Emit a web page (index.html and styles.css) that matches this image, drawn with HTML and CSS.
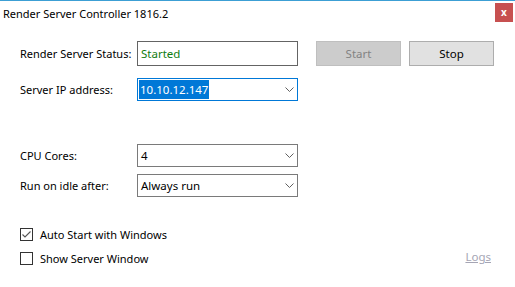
FILE: index.html
```html
<!DOCTYPE html>
<html lang="en">
<head>
    <meta charset="UTF-8">
    <title>Render Server Controller 1816.2</title>
    <link rel="stylesheet" href="styles.css">
</head>
<body>

    <!-- Window frame -->
    <div class="window">
        <div class="titlebar">
            <span class="title">Render Server Controller 1816.2</span>
            <button class="close">x</button>
        </div>

        <div class="form">
            <div class="row row-status">
                <label class="label">Render Server Status:</label>
                <div class="field status">Started</div>
                <div class="actions">
                    <button class="button disabled">Start</button>
                    <button class="button">Stop</button>
                </div>
            </div>

            <div class="row row-ip">
                <label class="label">Server IP address:</label>
                <div class="field combo focused">
                    <span class="selected">10.10.12.147</span>
                    <svg class="chevron" width="9" height="5" viewBox="0 0 9 5"><path d="M0.5 0.5 L4.5 4.5 L8.5 0.5" fill="none" stroke="#606060" stroke-width="1"/></svg>
                </div>
            </div>

            <div class="row row-cpu">
                <label class="label">CPU Cores:</label>
                <div class="field combo">
                    <span>4</span>
                    <svg class="chevron" width="9" height="5" viewBox="0 0 9 5"><path d="M0.5 0.5 L4.5 4.5 L8.5 0.5" fill="none" stroke="#606060" stroke-width="1"/></svg>
                </div>
            </div>

            <div class="row row-idle">
                <label class="label">Run on idle after:</label>
                <div class="field combo">
                    <span>Always run</span>
                    <svg class="chevron" width="9" height="5" viewBox="0 0 9 5"><path d="M0.5 0.5 L4.5 4.5 L8.5 0.5" fill="none" stroke="#606060" stroke-width="1"/></svg>
                </div>
            </div>

            <div class="checks">
                <div class="check-row">
                    <span class="checkbox">
                        <svg width="11" height="11" viewBox="0 0 11 11"><path d="M1.5 5.5 L4 8 L9.5 2.5" fill="none" stroke="#555" stroke-width="1.1"/></svg>
                    </span>
                    <span>Auto Start with Windows</span>
                </div>
                <div class="check-row">
                    <span class="checkbox"></span>
                    <span>Show Server Window</span>
                    <a class="logs" href="#">Logs</a>
                </div>
            </div>
        </div>
    </div>

</body>
</html>
```

FILE: styles.css
```css
body {
    margin: 0;
    padding: 0;
    background: #ffffff;
    font-family: 'Noto Sans', sans-serif;
    font-size: 11px;
    color: #000;
}
.window {
    width: 515px;
    height: 287px;
    border-top: 1px solid #3c9fd4;
    box-sizing: border-box;
}
/* Title bar */
.titlebar {
    height: 29px;
    display: flex;
    justify-content: space-between;
    align-items: flex-start;
}
.title {
    margin: 5px 0 0 3px;
    font-size: 11px;
}
.close {
    margin: 2px 2px 0 0;
    width: 18px;
    height: 19px;
    border: none;
    padding: 0;
    background: #c75050;
    color: #fff;
    font-family: 'Noto Sans', sans-serif;
    font-weight: bold;
    font-size: 10px;
    line-height: 17px;
}
/* Form */
.form {
    padding: 11px 0 0 20px;
}
.row {
    display: flex;
    align-items: center;
}
.label {
    width: 117px;
    flex-shrink: 0;
    white-space: nowrap;
}
.field {
    width: 161px;
    flex-shrink: 0;
    box-sizing: border-box;
    border: 1px solid #7a7a7a;
    padding-left: 3px;
    display: flex;
    align-items: center;
}
.row-status .field {
    height: 25px;
    border-color: #646464;
}
.status {
    color: #107c10;
    font-size: 11.5px;
}
.combo {
    height: 23px;
    justify-content: space-between;
    padding-right: 3px;
    font-size: 11.5px;
}
.combo.focused {
    border-color: #0078d7;
    padding-left: 1px;
}
.selected {
    background: #0078d7;
    color: #fff;
    line-height: 19px;
    padding: 0 1px;
}
.chevron {
    display: block;
}
.row-ip {
    margin-top: 12px;
}
.row-cpu {
    margin-top: 43px;
}
.row-idle {
    margin-top: 7px;
}
.actions {
    display: flex;
    gap: 8px;
    margin-left: 18px;
}
.button {
    width: 85px;
    height: 25px;
    background: #e1e1e1;
    border: 1px solid #adadad;
    font-family: 'Noto Sans', sans-serif;
    font-size: 11.5px;
    color: #000;
    padding: 0;
}
.button.disabled {
    background: #cccccc;
    border-color: #bfbfbf;
    color: #838383;
}
/* Checkboxes */
.checks {
    margin-top: 31px;
    display: flex;
    flex-direction: column;
    gap: 11px;
}
.check-row {
    display: flex;
    align-items: center;
    gap: 7px;
    height: 13px;
}
.checkbox {
    width: 13px;
    height: 13px;
    box-sizing: border-box;
    border: 1px solid #333;
    display: flex;
    align-items: center;
    justify-content: center;
}
.checkbox svg {
    display: block;
}
.logs {
    margin-left: auto;
    margin-right: 24px;
    color: #a5a5b4;
    position: relative;
    top: -2px;
    font-size: 11.5px;
}
```
